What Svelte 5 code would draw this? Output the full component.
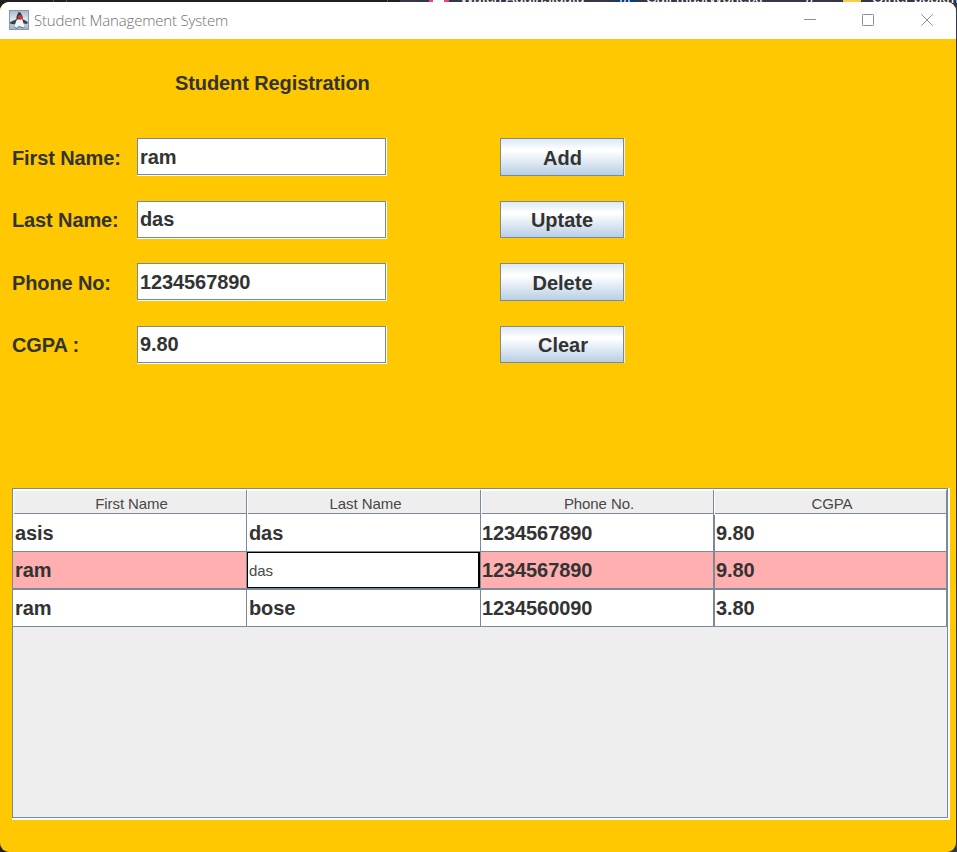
<script>
  const fields = [
    { label: 'First Name:', value: 'ram', action: 'Add', dx: 1, h: 38 },
    { label: 'Last Name:', value: 'das', action: 'Uptate', dx: 0, h: 37 },
    { label: 'Phone No:', value: '1234567890', action: 'Delete', dx: 1, h: 38 },
    { label: 'CGPA :', value: '9.80', action: 'Clear', dx: 2, h: 37 }
  ];
  const columns = ['First Name', 'Last Name', 'Phone No.', 'CGPA'];
  const rows = [
    ['asis', 'das', '1234567890', '9.80'],
    ['ram', 'das', '1234567890', '9.80'],
    ['ram', 'bose', '1234560090', '3.80']
  ];
</script>

<div class="desktop">
  <div class="tabs">
    <i class="seam first"></i><i class="seam second"></i><i class="seam third"></i>
    <i class="fav pink"></i><span class="t1">Watch Againstdata</span>
    <i class="fav blue"></i><span class="t2">Call mustWork.txt</span>
    <span class="t3">//</span>
    <i class="fav gold"></i><span class="t4">Other bookm</span>
  </div>
  <main class="window">
    <header class="titlebar">
      <svg class="logo" width="20" height="20" viewBox="0 0 20 20">
        <defs>
          <linearGradient id="tile" x1="0" y1="0" x2="0" y2="1">
            <stop offset="0" stop-color="#a9b9c8" /><stop offset=".45" stop-color="#dce6ec" /><stop offset="1" stop-color="#9db1c4" />
          </linearGradient>
        </defs>
        <rect x=".5" y=".5" width="19" height="19" fill="url(#tile)" stroke="#8699ac" />
        <path d="M7 9.5 3.5 11 1 12.2l.6 1.8 4 .2L8 13z" fill="#3c434c" />
        <path d="m13 9 3.5 1.5 2.5 2-1 1.5-3.5-.5z" fill="#3c434c" />
        <path d="M9.5 2 7.7 6 7 11h7l-.6-5L11.5 2.500z" fill="#343a43" />
        <path d="M8 9.500 6.500 13 5.800 17l1.700.8L10 16l4.500 1.500 1-1L14 12.500 13.200 9z" fill="#f5f6f7" />
        <path d="m5.500 17 2 1.300L10 16.400l4.500 1.600 1.200-1.200" fill="none" stroke="#515b67" stroke-width=".7" />
        <circle cx="11.200" cy="7.300" r="2.400" fill="#dc2d28" />
      </svg>
      <h1>Student Management System</h1>
      <svg class="controls" width="131" height="14" viewBox="0 0 131 14" fill="none" stroke="#8e8e8e">
        <path d="M0 6.500h12" />
        <rect x="58.500" y="1.500" width="11" height="11" rx=".7" />
        <path d="m117.300 1.300 11.400 11.400m0-11.400-11.400 11.400" />
      </svg>
    </header>

    <section class="form">
      <h2>Student Registration</h2>
      {#each fields as f}
        <div class="field" class:tall={f.h === 38}>
          <label for={f.action}>{f.label}</label>
          <div class="sunken"><input id={f.action} value={f.value} /></div>
          <button style="height:{f.h}px;padding-left:{f.dx}px">{f.action}</button>
        </div>
      {/each}
    </section>

    <section class="scroll">
      <div class="viewport">
        <div class="grid head">
          {#each columns as c}<div class="th"><span>{c}</span></div>{/each}
        </div>
        {#each rows as row, r}
          <div class="grid row" class:selected={r === 1}>
            {#each row as cell, c}
              <div class="td" class:editing={r === 1 && c === 1}>{cell}</div>
            {/each}
          </div>
        {/each}
      </div>
    </section>
  </main>
</div>

<style>
  :global(body) { overflow: hidden; background: #292b38; }
  .desktop {
    position: relative; box-sizing: border-box; width: 957px; height: 852px; padding: 2px 1px 0 0; overflow: hidden;
    background: linear-gradient(90deg, #211f22 0 400px, #343746 400px);
    font-family: "Liberation Sans", Arial, sans-serif; color: #333;
  }
  .tabs { position: absolute; top: 0; left: 0; width: 957px; height: 7px; overflow: hidden; }
  .tabs span { position: absolute; top: -10px; color: #fff; font-size: 15px; line-height: 16px; white-space: nowrap; }
  .tabs .t1 { left: 460px; }
  .tabs .t2 { left: 646px; }
  .tabs .t3 { left: 806px; }
  .tabs .t4 { left: 872px; }
  .seam { position: absolute; top: 0; width: 1px; height: 2px; background: #555; }
  .first { left: 53px; }
  .second { left: 66px; }
  .third { left: 387px; }
  .fav { position: absolute; top: 0; width: 20px; height: 2px; }
  .pink { left: 429px; background: linear-gradient(90deg, #ef4380 4px, #fff 4px 15px, #ef4380 15px); }
  .blue { left: 616px; background: linear-gradient(90deg, #083b82 4px, #9db5d8 4px 6px, #083b82 6px 8px, #9db5d8 8px 10px, #083b82 10px 12px, #9db5d8 12px 14px, #083b82 14px); }
  .gold { left: 843px; width: 18px; background: #f8cd4b; }
  .window { position: relative; height: 850px; overflow: hidden; border-radius: 9px; background: #ffc800; }
  .titlebar { display: flex; align-items: center; box-sizing: border-box; height: 37px; padding: 0 21px 0 9px; background: #fff; }
  .logo { flex: none; margin-top: -1px; }
  h1 { flex: 1; margin: -1px 0 0 5px; font: 300 15px/20px "Open Sans", "Noto Sans", sans-serif; letter-spacing: -.18px; color: #707070; white-space: nowrap; }
  .controls { margin-top: -2px; }
  .form { box-sizing: border-box; height: 449px; padding: 32px 12px 0; }
  h2 { margin: 0 0 42px 163px; font-size: 20px; line-height: 25px; letter-spacing: -.1px; }
  .field { display: flex; align-items: flex-start; height: 62px; font-size: 20px; font-weight: bold; }
  .tall { height: 63px; }
  label { width: 125px; padding-top: 7px; line-height: 25px; letter-spacing: -.12px; white-space: nowrap; }
  .tall label { padding-top: 8px; }
  .sunken { box-sizing: border-box; width: 250px; height: 38px; margin-right: 113px; background: #fff; }
  input { display: block; box-sizing: border-box; width: 249px; height: 37px; padding: 0 2px; border: 1px solid #7a8a99; background: #fff; color: #333; font: bold 20px/34px "Liberation Sans", Arial, sans-serif; letter-spacing: -.1px; outline: none; border-radius: 0; }
  .tall input { padding-top: 2px; }
  button {
    box-sizing: border-box; width: 124px; padding: 1px 0 0; border: 1px solid #7a8a99; border-radius: 0; box-shadow: 1px 0 #eef1f4;
    background: linear-gradient(#dde8f3 0%, #fff 30%, #fff 33%, #b8cfe5 100%); color: #333;
    font: bold 20px/34px "Liberation Sans", Arial, sans-serif;
  }
  .scroll { box-sizing: border-box; width: 938px; height: 332px; margin-left: 12px; padding: 0 2px 2px 0; background: #fff; }
  .viewport { box-sizing: border-box; height: 330px; border: 1px solid #7a8a99; background: #eee; }
  .grid { display: grid; grid-template-columns: 234px 234px 233px 233px; }
  .head { box-sizing: border-box; height: 26px; padding-top: 1px; background: #fff; }
  .th { box-sizing: border-box; height: 25px; padding: 1px 0 1px 1px; border-right: 1px solid #7a8a99; }
  .th span { display: block; box-sizing: border-box; height: 23px; padding-left: 3px; border-bottom: 1px solid #7a8a99; background: #eee; text-align: center; color: #484848; font-size: 15px; line-height: 25px; letter-spacing: -.08px; }
  .row { height: 37px; background: #fff; }
  .td { box-sizing: border-box; height: 37px; padding-left: 2px; border-right: 1px solid #7a8a99; border-bottom: 1px solid #7a8a99; font-size: 20px; font-weight: bold; line-height: 36px; letter-spacing: -.1px; white-space: nowrap; }
  .td:nth-child(3) { padding-left: 1px; border-right-width: 2px; margin-right: -1px; }
  .td:nth-child(4) { margin-left: 1px; padding-left: 1px; }
  .selected { background: #ffafaf; height: 38px; }
  .selected .td { height: 38px; border-bottom-width: 2px; }
  .selected .editing { height: 36px; padding-left: 1px; border: 1px solid #000; border-right-width: 2px; background: #fff; box-shadow: 0 2px #7a8a99, 1px 0 #7a8a99, 1px 2px #7a8a99; color: #484848; font-size: 15px; font-weight: normal; line-height: 36px; margin-right: 1px; }
</style>
